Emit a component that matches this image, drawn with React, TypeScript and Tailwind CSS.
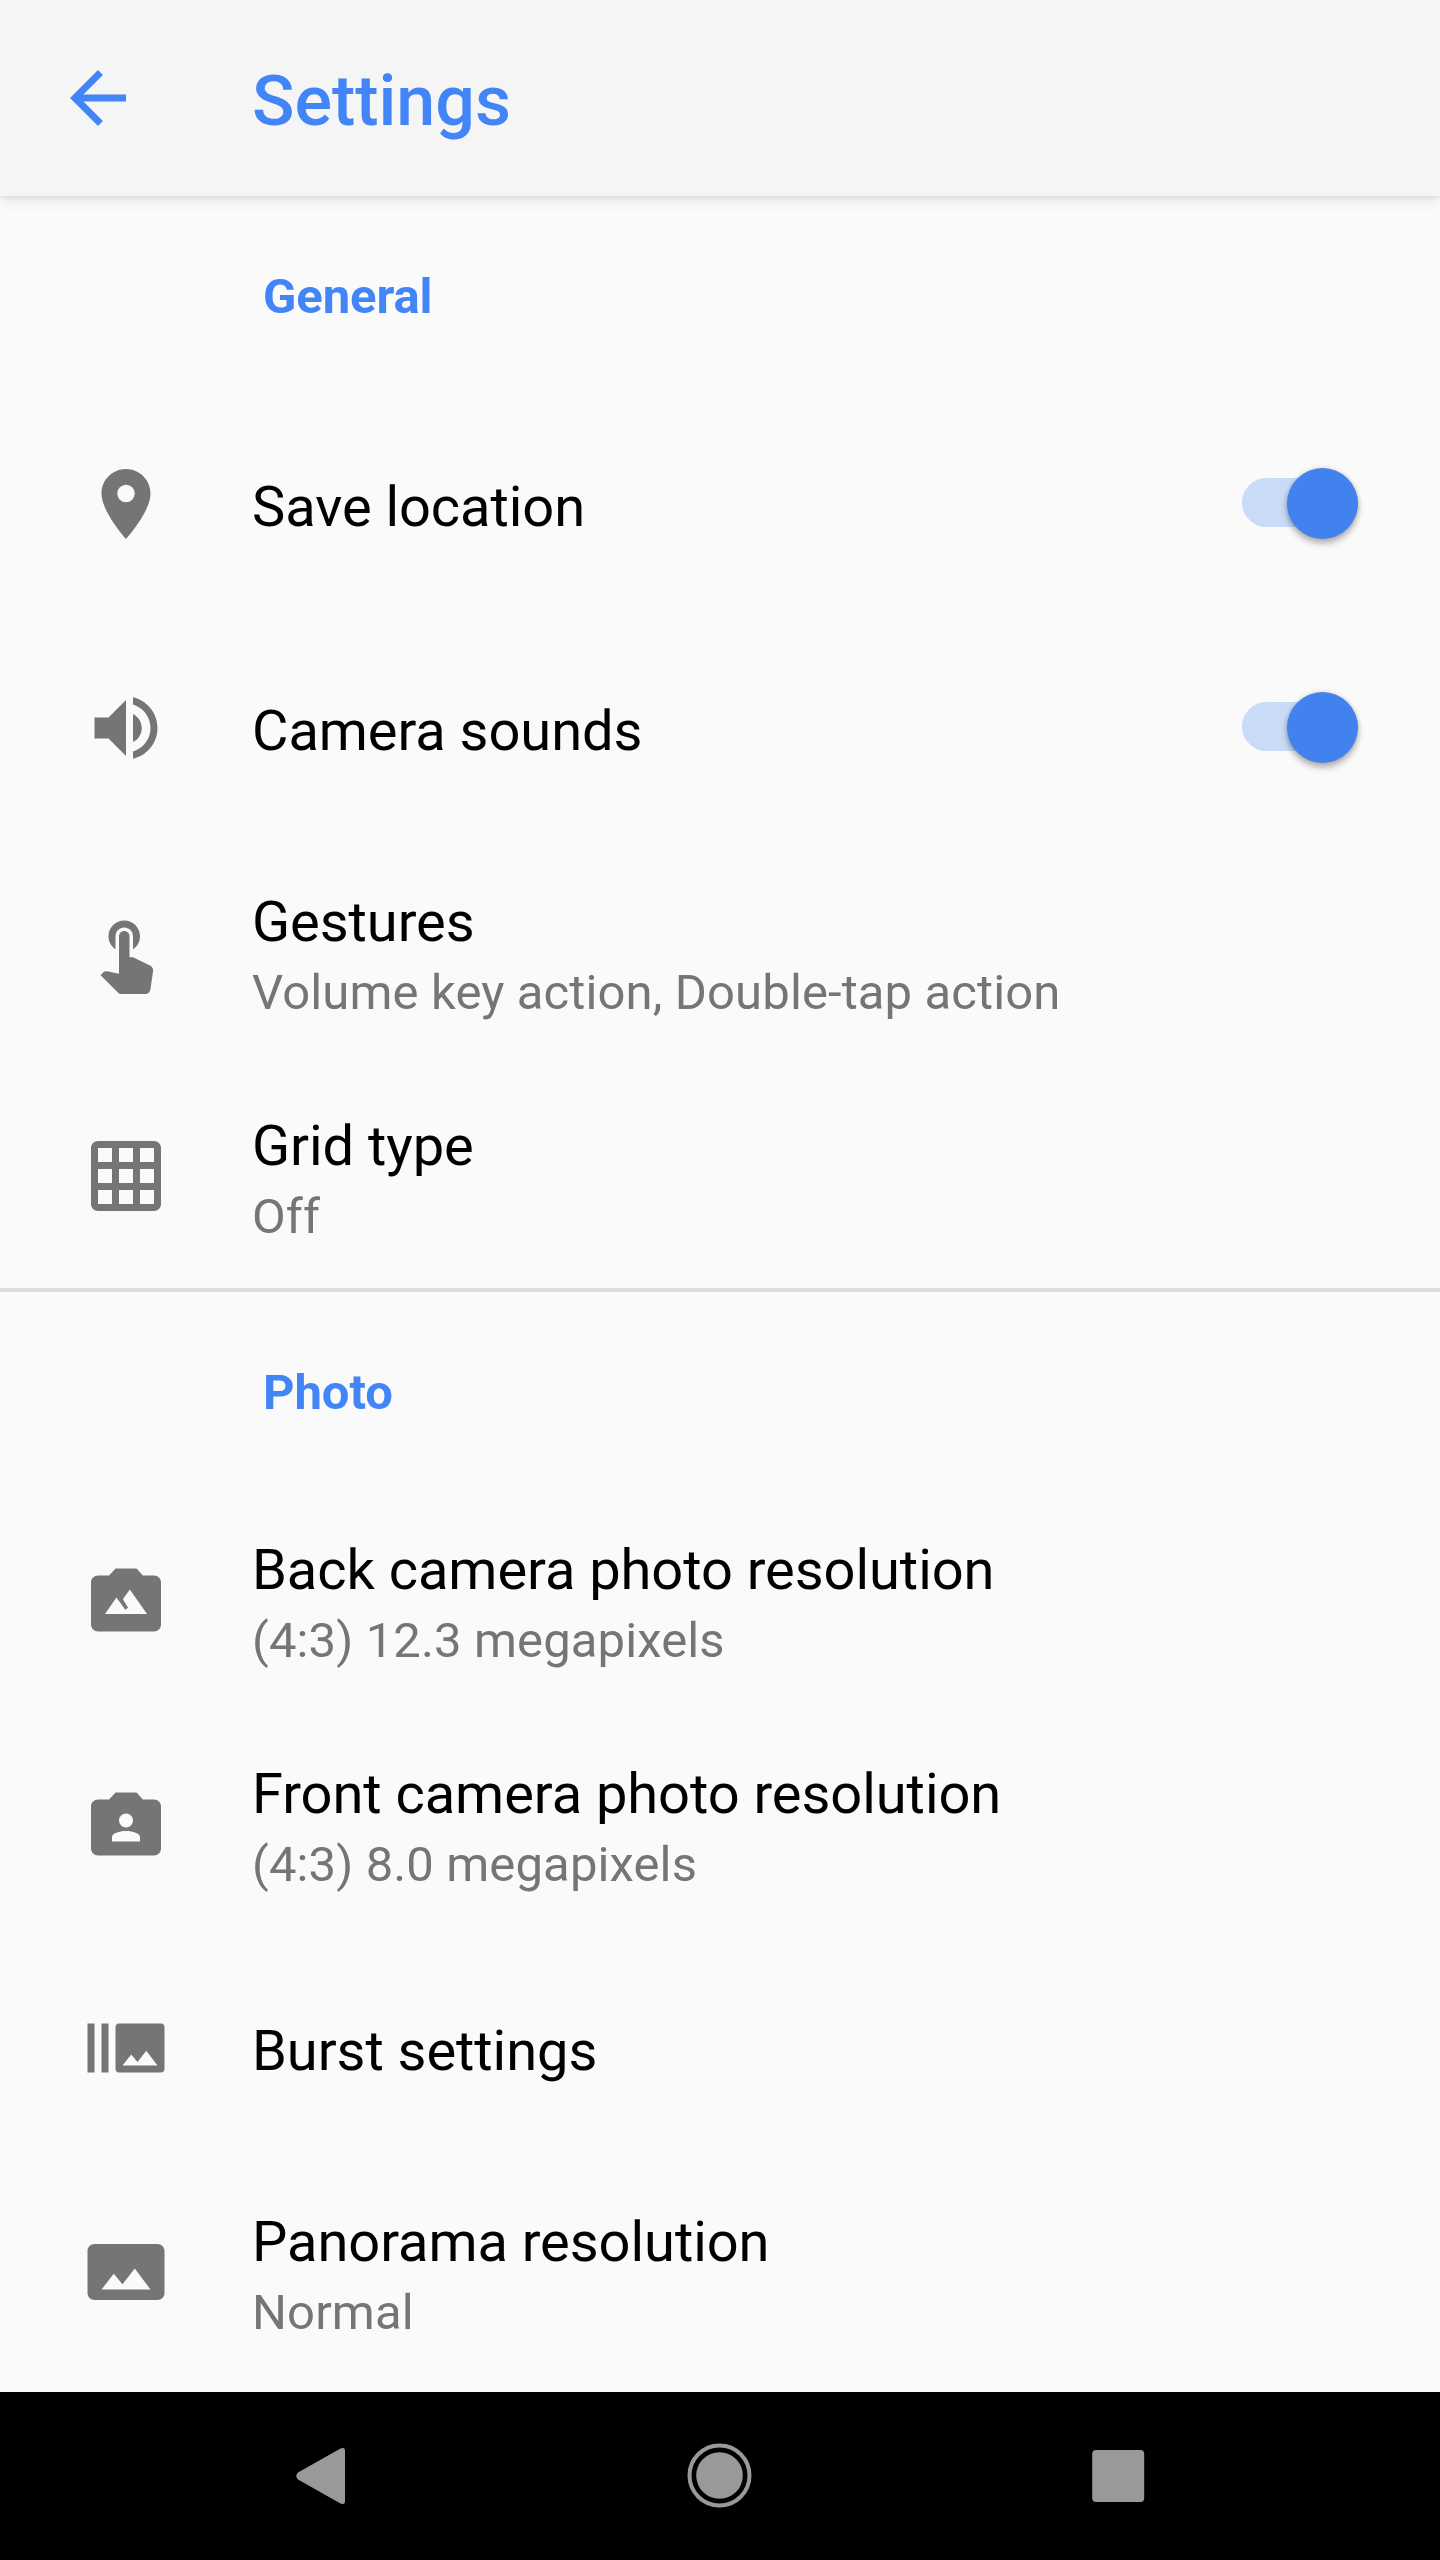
import type { ReactNode } from 'react';

interface Setting {
  title: string;
  summary?: string;
  icon: ReactNode;
  enabled?: boolean;
}

interface SettingsGroup {
  name: string;
  items: Setting[];
}

const groups: SettingsGroup[] = [
  {
    name: 'General',
    items: [
      {
        title: 'Save location',
        enabled: true,
        icon: (
          <path d="M12 2C8.13 2 5 5.13 5 9c0 5.25 7 13 7 13s7-7.75 7-13c0-3.87-3.13-7-7-7zm0 9.5a2.5 2.5 0 0 1 0-5 2.5 2.5 0 0 1 0 5z" />
        ),
      },
      {
        title: 'Camera sounds',
        enabled: true,
        icon: (
          <path d="M3 9v6h4l5 5V4L7 9H3zm13.5 3c0-1.77-1.02-3.29-2.5-4.03v8.05c1.48-.73 2.5-2.25 2.5-4.02zM14 3.23v2.06c2.89.86 5 3.54 5 6.71s-2.11 5.85-5 6.71v2.06c4.01-.91 7-4.49 7-8.77s-2.99-7.86-7-8.77z" />
        ),
      },
      {
        title: 'Gestures',
        summary: 'Volume key action, Double-tap action',
        icon: (
          <path d="M9 11.24V7.5C9 6.12 10.12 5 11.5 5S14 6.12 14 7.5v3.74c1.21-.81 2-2.18 2-3.74C16 5.01 13.99 3 11.5 3S7 5.01 7 7.5c0 1.56.79 2.93 2 3.74zm9.84 4.63l-4.54-2.26c-.17-.07-.35-.11-.54-.11H13v-6c0-.83-.67-1.5-1.5-1.5S10 6.67 10 7.5v10.74l-3.43-.72c-.08-.01-.15-.03-.24-.03-.31 0-.59.13-.79.33l-.79.8 4.94 4.94c.27.27.65.44 1.06.44h6.79c.75 0 1.33-.55 1.44-1.28l.75-5.27c.01-.07.02-.14.02-.2 0-.62-.38-1.16-.91-1.38z" />
        ),
      },
      {
        title: 'Grid type',
        summary: 'Off',
        icon: (
          <path d="M20 2H4c-1.1 0-2 .9-2 2v16c0 1.1.9 2 2 2h16c1.1 0 2-.9 2-2V4c0-1.1-.9-2-2-2zM8 20H4v-4h4v4zm0-6H4v-4h4v4zm0-6H4V4h4v4zm6 12h-4v-4h4v4zm0-6h-4v-4h4v4zm0-6h-4V4h4v4zm6 12h-4v-4h4v4zm0-6h-4v-4h4v4zm0-6h-4V4h4v4z" />
        ),
      },
    ],
  },
  {
    name: 'Photo',
    items: [
      {
        title: 'Back camera photo resolution',
        summary: '(4:3) 12.3 megapixels',
        icon: (
          <path
            fillRule="evenodd"
            d="M20 5h-3.17L15 3H9L7.17 5H4c-1.1 0-2 .9-2 2v12c0 1.1.9 2 2 2h16c1.1 0 2-.9 2-2V7c0-1.1-.9-2-2-2zM6 16l3.27-4.7 2.53 3.5.8-.6-1.5-2.4L13.09 9 18 16H6z"
          />
        ),
      },
      {
        title: 'Front camera photo resolution',
        summary: '(4:3) 8.0 megapixels',
        icon: (
          <path
            fillRule="evenodd"
            d="M20 5h-3.17L15 3H9L7.17 5H4c-1.1 0-2 .9-2 2v12c0 1.1.9 2 2 2h16c1.1 0 2-.9 2-2V7c0-1.1-.9-2-2-2zm-8 4a2 2 0 0 1 0 4 2 2 0 0 1 0-4zm4 8H8v-1.3c0-1 2-1.7 4-1.7s4 .7 4 1.7V17z"
          />
        ),
      },
      {
        title: 'Burst settings',
        icon: (
          <path d="M1 5h2v14H1zm4 0h2v14H5zm17 0H10c-.55 0-1 .45-1 1v12c0 .55.45 1 1 1h12c.55 0 1-.45 1-1V6c0-.55-.45-1-1-1zM11 17l2.5-3.15L15.29 16l2.5-3.22L21 17H11z" />
        ),
      },
      {
        title: 'Panorama resolution',
        summary: 'Normal',
        icon: (
          <path d="M23 18V6c0-1.1-.9-2-2-2H3c-1.1 0-2 .9-2 2v12c0 1.1.9 2 2 2h18c1.1 0 2-.9 2-2zM8.5 12.5l2.5 3.01L14.5 11l4.5 6H5l3.5-4.5z" />
        ),
      },
    ],
  },
];

function Icon({ children }: { children: ReactNode }) {
  return (
    <svg viewBox="0 0 24 24" fill="currentColor" className="size-[84px] shrink-0">
      {children}
    </svg>
  );
}

function Toggle() {
  return (
    <button
      role="switch"
      aria-checked="true"
      className="mb-[3px] flex h-[49px] w-[116px] items-center justify-end rounded-full bg-[#c9dbf7]"
    >
      <span className="mt-[2px] size-[71px] shrink-0 rounded-full bg-[#4282ee] shadow-[0_5px_6px_rgba(0,0,0,0.26),0_0_5px_rgba(0,0,0,0.16)]" />
    </button>
  );
}

function SettingRow({ title, summary, icon, enabled }: Setting) {
  return (
    <li className="flex h-56 items-center pr-[82px] pl-[84px]">
      <span className="text-[#757575]">
        <Icon>{icon}</Icon>
      </span>
      <div className="ml-[84px] flex-1 pt-1.5">
        <p className="text-[56px] leading-[66px] tracking-[-0.05px] text-black">{title}</p>
        {summary && (
          <p className="mt-[9px] -mb-px text-[49px] leading-[58px] tracking-[0.12px] text-[#757575]">
            {summary}
          </p>
        )}
      </div>
      {enabled && <Toggle />}
    </li>
  );
}

export default function App() {
  return (
    <div className="flex h-[2560px] w-[1440px] flex-col overflow-hidden bg-[#fafafa] font-[Roboto,sans-serif]">
      <header className="z-10 flex h-[196px] shrink-0 items-center bg-[#f5f5f5] pl-14 text-[#4285f6] shadow-[0_2px_4px_rgba(0,0,0,0.07),0_4px_14px_rgba(0,0,0,0.09)]">
        <button aria-label="Back">
          <Icon>
            <path d="M20 11H7.83l5.59-5.59L12 4l-8 8 8 8 1.41-1.41L7.83 13H20v-2z" />
          </Icon>
        </button>
        <h1 className="ml-28 pt-[5px] text-[70px] leading-[82px] font-medium">Settings</h1>
      </header>

      <main className="flex-1 overflow-hidden">
        {groups.map((group) => (
          <section key={group.name} className="border-b-4 border-[#dcdcdc] last:border-b-0">
            <h2 className="flex h-[196px] items-center pt-[5px] pl-[263px] text-[49px] leading-[58px] font-bold tracking-[-0.1px] text-[#4285f6]">
              {group.name}
            </h2>
            <ul>
              {group.items.map((item) => (
                <SettingRow key={item.title} {...item} />
              ))}
            </ul>
          </section>
        ))}
      </main>

      <nav className="flex h-[168px] shrink-0 items-center justify-between bg-black px-[280px] text-[#999999]">
        <button aria-label="Back">
          <svg viewBox="0 0 80 80" fill="currentColor" className="size-20">
            <path d="M18 36.5L60.5 12.6Q65 10.5 65 15v50q0 4.5-4.5 2.4L18 43.500q-3.5-3.5 0-7z" />
          </svg>
        </button>
        <button aria-label="Home">
          <svg viewBox="0 0 80 80" className="size-20">
            <circle cx="39.5" cy="39.5" r="30" fill="none" stroke="currentColor" strokeWidth="4" />
            <circle cx="39.5" cy="39.5" r="23.3" fill="currentColor" />
          </svg>
        </button>
        <button aria-label="Recent apps">
          <svg viewBox="0 0 80 80" fill="currentColor" className="size-20">
            <rect x="12.2" y="14" width="52" height="52" rx="4" />
          </svg>
        </button>
      </nav>
    </div>
  );
}
